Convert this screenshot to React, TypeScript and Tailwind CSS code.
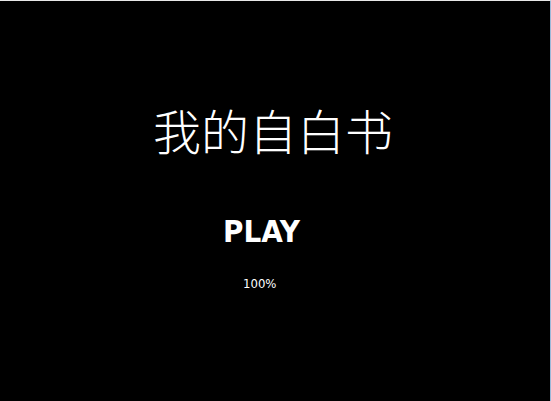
import React from 'react';

export default function App() {
  return (
    <div className="h-[401px] w-[551px] bg-black border-t border-t-[#e8e8e8] border-r border-r-[#9bb8d8] flex flex-col">
      <div className="pt-[96px] pl-[153px]">
        <h1 className="text-[48px] leading-[64px] font-light text-white whitespace-nowrap" style={{ fontFamily: '"Noto Sans CJK SC", sans-serif' }}>
          我的自白书
        </h1>
      </div>
      <div className="pt-[54px] pl-[223px]">
        <button className="text-[31px] leading-[32px] font-bold text-white" style={{ fontFamily: '"DejaVu Sans Condensed", sans-serif' }}>
          PLAY
        </button>
      </div>
      <div className="pt-[22px] pl-[243px]">
        <span className="text-[13px] leading-[16px] text-white" style={{ fontFamily: '"DejaVu Sans Condensed", sans-serif' }}>
          100%
        </span>
      </div>
    </div>
  );
}
